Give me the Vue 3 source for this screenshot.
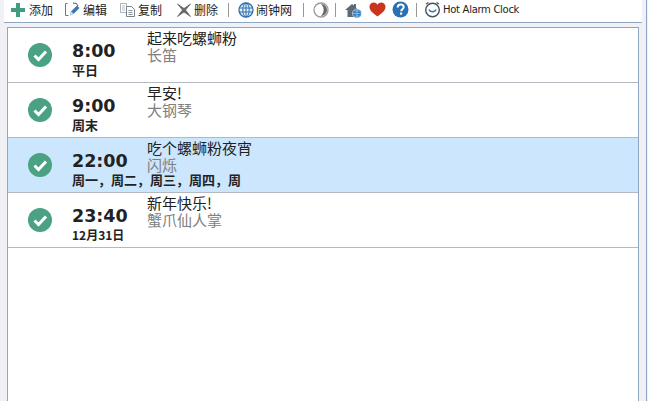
<template>
  <div class="app">
    <div class="window">
      <div class="toolbar">
        <div class="tool" style="margin-left: 7px">
          <svg width="14" height="14" viewBox="0 0 14 14"><path d="M5 0h4v5h5v4H9v5H5V9H0V5h5z" fill="#3f9d80" /></svg>
          <span class="first">添加</span>
        </div>
        <div class="tool" style="margin-left: 11px">
          <svg width="17" height="15" viewBox="0 0 17 15">
            <path d="M3.500 1.500H1.500v12h3" fill="none" stroke="#777" />
            <path d="M6 13.500l1-4 6-6 2.500 2.500-6 6z" fill="#3f76ad" />
            <path d="M7 9.500l3 2.500-4 1.500z" fill="#cfe0ee" />
            <path d="M9 1l3.500.5L14 4" fill="none" stroke="#555" />
          </svg>
          <span>编辑</span>
        </div>
        <div class="tool" style="margin-left: 12px">
          <svg width="17" height="15" viewBox="0 0 17 15">
            <path d="M1.500 1.500h6v9h-6z" fill="#fff" stroke="#a9b2bb" />
            <path d="M3 4h3M3 6h3M3 8h3" stroke="#b5bcc4" />
            <path d="M7.500 4.500h5l3 3v7h-8z" fill="#fff" stroke="#77818c" />
            <path d="M9.500 8.500h4M9.500 10.500h4M9.500 12.500h4" stroke="#8b949e" />
          </svg>
          <span>复制</span>
        </div>
        <div class="tool" style="margin-left: 14px">
          <svg width="16" height="14" viewBox="0 0 16 14"><path d="M1.500 1L8 5.500 14.500 1l-5 6 5 6.500L8 9l-6.500 4.500 5-6.500z" fill="#666" stroke="#666" stroke-width=".8" /></svg>
          <span>删除</span>
        </div>
        <i class="sep" style="margin-left: 10px"></i>
        <div class="tool" style="margin-left: 9px">
          <svg width="16" height="16" viewBox="0 0 16 16">
            <circle cx="8" cy="8" r="7" fill="#e4eef8" stroke="#2f6fb0" stroke-width="1.300" />
            <ellipse cx="8" cy="8" rx="3.200" ry="7" fill="none" stroke="#2f6fb0" />
            <path d="M1 6h14M1 10h14M8 1v14" stroke="#2f6fb0" />
          </svg>
          <span>闹钟网</span>
        </div>
        <i class="sep" style="margin-left: 11px"></i>
        <svg class="plain" style="margin-left: 9px" width="16" height="16" viewBox="0 0 16 16">
          <circle cx="8" cy="8" r="7" fill="#fff" stroke="#9a9a9a" stroke-width="1.300" />
          <path d="M8 2a6 6 0 0 1 0 12 8 8 0 0 0 0-12z" fill="#666" />
        </svg>
        <i class="sep" style="margin-left: 6px"></i>
        <svg class="plain" style="margin-left: 9px" width="17" height="16" viewBox="0 0 17 16">
          <path d="M0 8l7-6 2 1.600V2h2v3.500L13 8H11.500v7h-9V8z" fill="#5c6b73" />
          <circle cx="12" cy="11.500" r="4.500" fill="#2f78bb" stroke="#fff" stroke-width=".6" />
          <path d="M8 11.500h8M12 7.500v8M9.500 9h5M9.500 14h5" stroke="#bcd8ee" stroke-width=".6" />
        </svg>
        <svg class="plain" style="margin-left: 7px" width="17" height="15" viewBox="0 0 17 15"><path d="M8.500 14.500C3 10.500 .5 8 .5 4.700 .5 2.200 2.500.5 4.700.5c1.600 0 3 .8 3.800 2.200C9.300 1.300 10.700.5 12.300.5c2.200 0 4.200 1.700 4.200 4.200 0 3.300-2.500 5.800-8 9.800z" fill="#c9351f" /></svg>
        <svg class="plain" style="margin-left: 6px" width="17" height="17" viewBox="0 0 17 17">
          <circle cx="8.500" cy="8.500" r="8" fill="#2a70b4" />
          <path d="M5.700 6.500c0-4 6-4 6-.4 0 2.200-2.500 2.200-2.500 4.200" fill="none" stroke="#fff" stroke-width="2" />
          <rect x="8" y="11.500" width="2.200" height="2.200" fill="#fff" />
        </svg>
        <i class="sep" style="margin-left: 7px"></i>
        <div class="tool about" style="margin-left: 7px">
          <svg width="17" height="17" viewBox="0 0 17 17">
            <circle cx="8.500" cy="9" r="6.800" fill="#fff" stroke="#44525e" stroke-width="1.400" />
            <path d="M5 8.500c1 3 6 3 7 0" fill="none" stroke="#2f78bb" stroke-width="1.300" />
            <path d="M2 3l2.500-1.500M15 3l-2.500-1.500" stroke="#44525e" stroke-width="1.300" />
          </svg>
          <span>Hot Alarm Clock</span>
        </div>
      </div>
      <div class="list">
        <div v-for="item in alarms" :key="item.time" class="row" :class="{ selected: item.selected }">
          <svg class="check" width="24" height="24" viewBox="0 0 24 24">
            <circle cx="12" cy="12" r="12" fill="#4aa183" />
            <path d="M6.500 12.500l4 4 7.500-8" fill="none" stroke="#fff" stroke-width="3" />
          </svg>
          <div class="when">
            <div class="time">{{ item.time }}</div>
            <div class="days" :class="{ date: item.date }">{{ item.days }}</div>
          </div>
          <div class="info">
            <div class="name">{{ item.name }}</div>
            <div class="sound">{{ item.sound }}</div>
          </div>
        </div>
      </div>
    </div>
  </div>
</template>

<script setup>
const alarms = [
  { time: '8:00', days: '平日', name: '起来吃螺蛳粉', sound: '长笛' },
  { time: '9:00', days: '周末', name: '早安!', sound: '大钢琴' },
  { time: '22:00', days: '周一，周二，周三，周四，周', name: '吃个螺蛳粉夜宵', sound: '闪烁', selected: true },
  { time: '23:40', days: '12月31日', name: '新年快乐!', sound: '蟹爪仙人掌', date: true }
]
</script>

<style>
html, body { margin: 0; height: 100%; overflow: hidden; background: #f0f0f5; }
</style>

<style scoped>
.app { height: 401px; box-sizing: border-box; padding: 0 1px 0 4px; font-family: "Noto Sans CJK SC", sans-serif; color: #222; overflow: hidden; }
.window { height: 401px; box-sizing: border-box; padding-right: 4px; border-right: 1px solid #8fa7c4; }
.toolbar { height: 23px; box-sizing: border-box; display: flex; align-items: center; padding-bottom: 3px; background: #fff; border-bottom: 1px solid #8fa7c4; font-size: 12px; }
.tool { display: flex; align-items: center; gap: 2px; }
.first { margin-left: 2px; }
.plain { flex-shrink: 0; }
.sep { width: 1px; height: 14px; background: #999; }
.about span { font-family: "DejaVu Sans", sans-serif; font-size: 10px; letter-spacing: -0.3px; }
.list { margin: 4px 3px 0; height: 378px; box-sizing: border-box; background: #fff; border: 1px solid #8fa7c4; border-bottom: none; }
.row { height: 55px; box-sizing: border-box; display: flex; border-bottom: 1px solid #b4b9bf; }
.row.selected { background: #cbe6fd; }
.check { flex-shrink: 0; margin: 15px 0 0 20px; }
.when { width: 75px; flex-shrink: 0; margin-left: 20px; padding-top: 12px; white-space: nowrap; }
.time { font-family: "DejaVu Sans", sans-serif; font-weight: 700; font-size: 17.500px; line-height: 22px; }
.days { font-size: 13px; font-weight: 700; line-height: 14px; margin-top: 1px; }
.days.date { font-size: 12px; }
.info { padding-top: 1px; }
.name { font-size: 15px; line-height: 17px; }
.sound { font-size: 15px; line-height: 16px; margin-top: 1px; color: #808080; }
</style>
